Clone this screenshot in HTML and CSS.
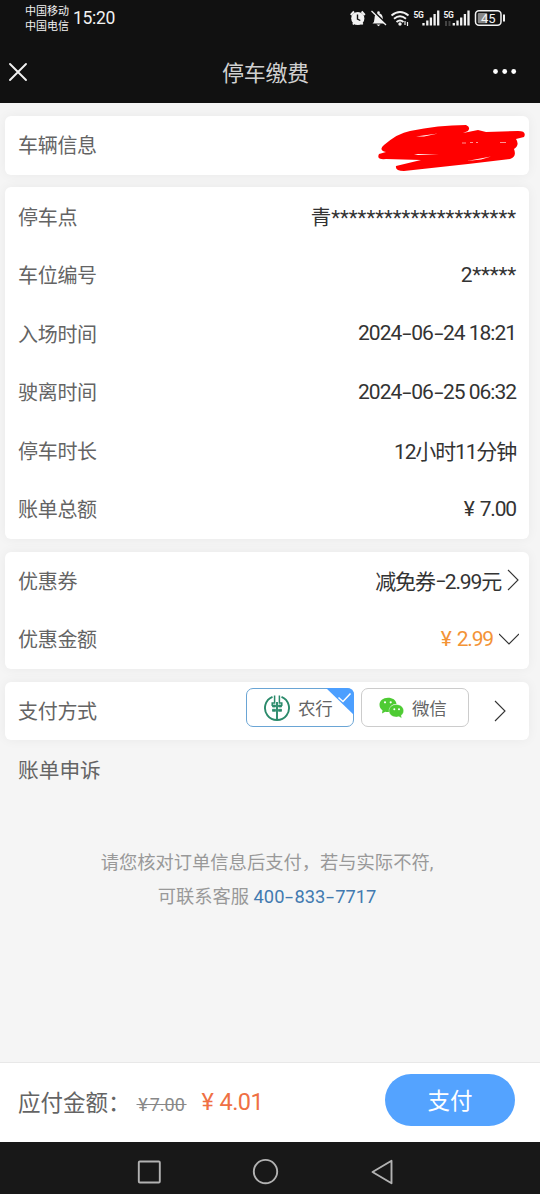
FILE: index.html
```html
<!DOCTYPE html>
<html lang="zh-CN">
<head>
<meta charset="utf-8">
<title>停车缴费</title>
<link rel="stylesheet" href="styles.css">
</head>
<body>
<header class="top">
  <div class="status">
    <div class="carriers"><span>中国移动</span><span>中国电信</span></div>
    <span class="clock">15:20</span>
    <svg class="status-icons" width="160" height="24" viewBox="0 0 160 24" fill="none" stroke="#f2f2f2">
      <circle cx="7.800" cy="12.500" r="6.600" fill="#f2f2f2" stroke="none"/>
      <path d="M.8 9 4 5.500M14.800 9 11.600 5.500M3 18.500l1.500-2M12.600 18.500l-1.500-2" stroke-width="2"/>
      <path d="M7.500 8.500v4.500l2.800 1.500" stroke="#111" stroke-width="1.400"/>
      <path d="M22.500 17.500q2-1.500 2-5c0-3.500 1.500-5 4-5.500 3 .5 4.300 2.500 4.300 5.500s.5 4 2 5zM26.500 18.500h4l-2 1.800z" fill="#f2f2f2" stroke="none"/>
      <circle cx="28.500" cy="6.500" r="1.300" fill="#f2f2f2" stroke="none"/>
      <path d="M22.500 4.500 37.500 19" stroke="#111" stroke-width="2"/>
      <path d="M21.500 5 36 19" stroke-width="1.300"/>
      <path d="M41.500 9.500q8.500-7 17 0M44 12.800q6-5 12 0M46.500 16q3.500-3 7 0" stroke-width="1.900"/>
      <circle cx="50" cy="18" r="1.700" fill="#f2f2f2" stroke="none"/>
      <path d="M55 15v4M57.500 16v4" stroke-width="1.200"/>
      <path d="M73.500 17v2.500M77.300 14.500v5M80.900 11.500v8M84.600 8v11.500M88.200 4.500v15" stroke-width="2.300"/>
      <path d="M103.800 17v2.500M107.500 14.500v5M111.200 11.500v8M114.900 8v11.500M118.500 4.500v15" stroke-width="2.300"/>
      <path d="M96 15v5M99.500 15v5" stroke="#444" stroke-width="2"/>
      <rect x="125.500" y="4.800" width="25.500" height="14.500" rx="3.500" stroke-width="1.500"/>
      <rect x="127.800" y="7" width="9.500" height="10.200" rx="1" fill="#888" stroke="none"/>
      <path d="M154 8.500v7" stroke-width="2"/>
      <text class="tiny" x="63.500" y="11.500">5G</text>
      <text class="tiny" x="93.500" y="11.500">5G</text>
      <text class="battery" x="131" y="17">45</text>
    </svg>
  </div>
  <div class="nav">
    <svg width="20" height="20" viewBox="0 0 20 20" fill="none" stroke="#f2f2f2" stroke-width="1.900" stroke-linecap="round"><path d="M2 2 18 18M18 2 2 18"/></svg>
    <h1 class="title">停车缴费</h1>
    <svg width="26" height="8" viewBox="0 0 26 8" fill="#fff"><circle cx="2.500" cy="3.500" r="2.400"/><circle cx="11.700" cy="3.500" r="2.400"/><circle cx="20.700" cy="3.500" r="2.400"/></svg>
  </div>
</header>

<main class="content">
  <section class="card">
    <div class="row">
      <span>车辆信息</span>
      <svg class="scribble" width="148" height="49" viewBox="0 0 148 49">
        <path d="M6 22Q20 10 32 8Q60 2 88 2Q93 4 90 8L85 10 100 7 108 9 140 8Q149 8 146 14L138 16Q142 22 136 26Q139 34 132 36L90 41 26 48Q17 48 18 43L43 37 8 36Q-2 37 1 31L8 29Q0 27 6 22Z" fill="#f00"/>
        <path d="M38 13.500l22-3-14 3zM36 31h25l-21 1zM89 38l24-4.500-10 3z" fill="#fff"/>
        <path d="M84 20h4M92 19.500h3M98 19.500h2M122 19.500h6" stroke="#fbb" stroke-width=".8"/>
      </svg>
    </div>
  </section>

  <section class="card">
    <div class="row"><span>停车点</span><span class="value stars">青*********************</span></div>
    <div class="row"><span>车位编号</span><span class="value code">2*****</span></div>
    <div class="row"><span>入场时间</span><span class="value date">2024<i class="dash">-</i>06<i class="dash">-</i>24 18:21</span></div>
    <div class="row"><span>驶离时间</span><span class="value date">2024<i class="dash">-</i>06<i class="dash">-</i>25 06:32</span></div>
    <div class="row"><span>停车时长</span><span class="value">12小时11分钟</span></div>
    <div class="row"><span>账单总额</span><span class="value"><i class="yen">¥</i>7.00</span></div>
  </section>

  <section class="card">
    <div class="row"><span>优惠券</span><span class="value with-icon">减免券<i class="dash">-</i>2.99元
      <svg width="12" height="22" viewBox="0 0 12 22" fill="none" stroke="#333" stroke-width="1.100"><path d="M1 1 11 11 1 21"/></svg></span></div>
    <div class="row"><span>优惠金额</span><span class="value with-icon discount"><i class="yen">¥</i>2.99
      <svg width="20" height="12" viewBox="0 0 20 12" fill="none" stroke="#333" stroke-width="1.100"><path d="M0 1 10 11 20 1"/></svg></span></div>
  </section>

  <section class="card">
    <div class="row">
      <span>支付方式</span>
      <div class="methods">
        <div class="method selected">
          <svg width="28" height="28" viewBox="0 0 28 28" fill="none" stroke="#2b8a6b">
            <path d="M9.500 2.900A12 12 0 1 0 18.500 2.900" stroke-width="1.900"/>
            <path d="M14 8v18" stroke-width="1.900"/>
            <path d="M11.600 1.500v7.500H9.200v3M16.400 1.500v7.500h2.400v3" stroke-width="1.500"/>
            <path d="M9.500 11h3v2h-3zM15.500 11h3v2h-3zM9.500 15.300h3v2h-3zM15.500 15.300h3v2h-3z" fill="#2b8a6b" stroke-width=".8"/>
          </svg>
          <span>农行</span>
          <svg class="tick" width="28" height="27" viewBox="0 0 28 27"><path d="M0 0H21Q28 0 28 7V27Z" fill="#4c9fff"/><path d="M12.500 9.500 17 13.500 24.500 5.500" fill="none" stroke="#fff" stroke-width="1.500"/></svg>
        </div>
        <div class="method">
          <svg class="wechat" width="26" height="22" viewBox="0 0 26 22">
            <path d="M9 .8C4 .8.5 3.900.5 7.800c0 2.300 1.200 4.200 3 5.500L3 16.500l3.200-1.700q1.400.4 3.800.3C9.500 10.500 13 7 17.500 7 17 3 13.500.8 9 .8z" fill="#4ecb33"/>
            <path d="M17.300 7.500c-4 0-7.300 2.800-7.300 6.300s3.300 6.200 7.300 6.200q1.500 0 2.600-.4l2.800 1.700-.6-2.800c1.500-1 2.500-2.700 2.500-4.700 0-3.500-3.300-6.300-7.300-6.300z" fill="#4ecb33" stroke="#fff" stroke-width=".3"/>
            <g fill="#fff"><circle cx="6" cy="5.300" r="1.100"/><circle cx="11.700" cy="5.300" r="1.100"/><circle cx="15.300" cy="12.300" r="1"/><circle cx="20" cy="12.300" r="1"/></g>
          </svg>
          <span>微信</span>
        </div>
        <svg class="more" width="12" height="22" viewBox="0 0 12 22" fill="none" stroke="#333" stroke-width="1.100"><path d="M1 1 11 11 1 21"/></svg>
      </div>
    </div>
  </section>

  <div class="appeal">账单申诉</div>
  <p class="note">请您核对订单信息后支付，若与实际不符,<br><span class="line2">可联系客服 <a class="phone">400<i class="dash">-</i>833<i class="dash">-</i>7717</a></span></p>
</main>

<footer class="pay-bar">
  <span class="due">应付金额：</span>
  <s class="old">&hairsp;¥&hairsp;7.00&hairsp;</s>
  <span class="total"><i class="yen">¥</i>4.01</span>
  <button class="pay">支付</button>
</footer>

<div class="system-nav">
  <svg width="540" height="52" viewBox="0 0 540 52" fill="none" stroke="#b2b2b2" stroke-width="1.900" stroke-linejoin="round">
    <rect x="138.800" y="19.500" width="21" height="21" rx="1"/>
    <circle cx="265.500" cy="29.600" r="11.700"/>
    <path d="M391.500 18.800v22.500L372.500 30z"/>
  </svg>
</div>
</body>
</html>
```
FILE: styles.css
```css
* { box-sizing: border-box; }
body {
  margin: 0;
  width: 540px;
  height: 1194px;
  display: flex;
  flex-direction: column;
  overflow: hidden;
  background: #f5f5f5;
  color: #646464;
  font-family: Roboto, "Noto Sans CJK SC", sans-serif;
  font-size: 20px;
  white-space: nowrap;
}
i { font-style: normal; }
svg { display: block; flex: none; }

.top { height: 103px; flex: none; background: #111; color: #f2f2f2; }
.status { height: 41px; padding: 4px 0 0 25px; display: flex; align-items: flex-start; }
.carriers { display: flex; flex-direction: column; font-size: 11px; line-height: 15px; }
.clock { margin: 4px 0 0 4px; font-size: 17.500px; line-height: 20px; letter-spacing: -0.3px; }
.status-icons { margin: 2px 30px 0 auto; }
.tiny { font: bold 8.500px Roboto, sans-serif; fill: #f2f2f2; stroke: none; letter-spacing: -0.5px; }
.battery { font: 13px Roboto, sans-serif; fill: #f2f2f2; stroke: none; }
.nav { height: 62px; padding: 0 21px 0 8px; display: flex; align-items: center; justify-content: space-between; }
.title { margin: -3px 0 0; padding-left: 10px; color: #d0d0d0; font-size: 22px; font-weight: 400; letter-spacing: -0.3px; }

.content { flex: 1; padding: 13px 11px 0 5px; }
.card { margin-bottom: 12.900px; background: #fff; border-radius: 6px; box-shadow: 0 0 12px rgba(0, 0, 0, 0.05); }
.row { height: 58.550px; padding: 0 13px 1px 13px; display: flex; align-items: center; justify-content: space-between; letter-spacing: -0.3px; }
.scribble { margin: 5px -10px 0 0; }
.value { color: #333; font-size: 21px; letter-spacing: -1.150px; }
.stars { font-size: 20.500px; letter-spacing: -0.030px; }
.code { letter-spacing: -0.3px; }
.date { letter-spacing: -1px; }
.dash { display: inline-block; width: 10px; text-align: center; transform: scaleX(1.6); }
.yen { display: inline-block; width: 16px; }
.with-icon { display: flex; align-items: center; }
.with-icon svg { margin: 0 -3px 0 6px; }
.discount { color: #f39336; }
.methods { display: flex; align-items: center; }
.method {
  position: relative;
  width: 108px;
  height: 39px;
  margin: -5px 7px 0 0;
  padding-left: 16px;
  display: flex;
  align-items: center;
  gap: 7px;
  border: 1px solid #ccc;
  border-radius: 7px;
  font-size: 17.500px;
}
.selected { border-color: #6aa5d5; }
.tick { position: absolute; top: -1px; right: -1px; }
.wechat { margin: 0 0 0 1px; }
.more { margin: 2px 10px 0 18px; }
.appeal { margin-top: 2px; padding: 3px 0 0 13px; line-height: 30px; font-size: 20.700px; }
.note { margin: 60px 0 0; text-align: center; color: #999; font-size: 18.300px; line-height: 34px; }
.phone { color: #427ab0; }
.phone .dash { width: 10px; }

.pay-bar { height: 80px; flex: none; padding: 0 25px 0 18px; display: flex; align-items: center; background: #fff; border-top: 1px solid #e8e8e8; }
.due { margin-top: -4px; font-size: 22.500px; }
.old { margin: 3px 0 0 6px; color: #888; font-size: 18px; letter-spacing: 0; }
.total { margin: -1px 0 0 15px; color: #ef7044; font-size: 23.500px; letter-spacing: -0.6px; }
.total .yen { width: 18px; }
.pay { width: 130px; height: 52px; margin: -5px 0 0 auto; padding: 0 0 3px; border: 0; border-radius: 26px; background: #54a3ff; color: #fff; font: 22.500px "Noto Sans CJK SC", sans-serif; }
.system-nav { height: 52px; flex: none; background: #181818; }
```
